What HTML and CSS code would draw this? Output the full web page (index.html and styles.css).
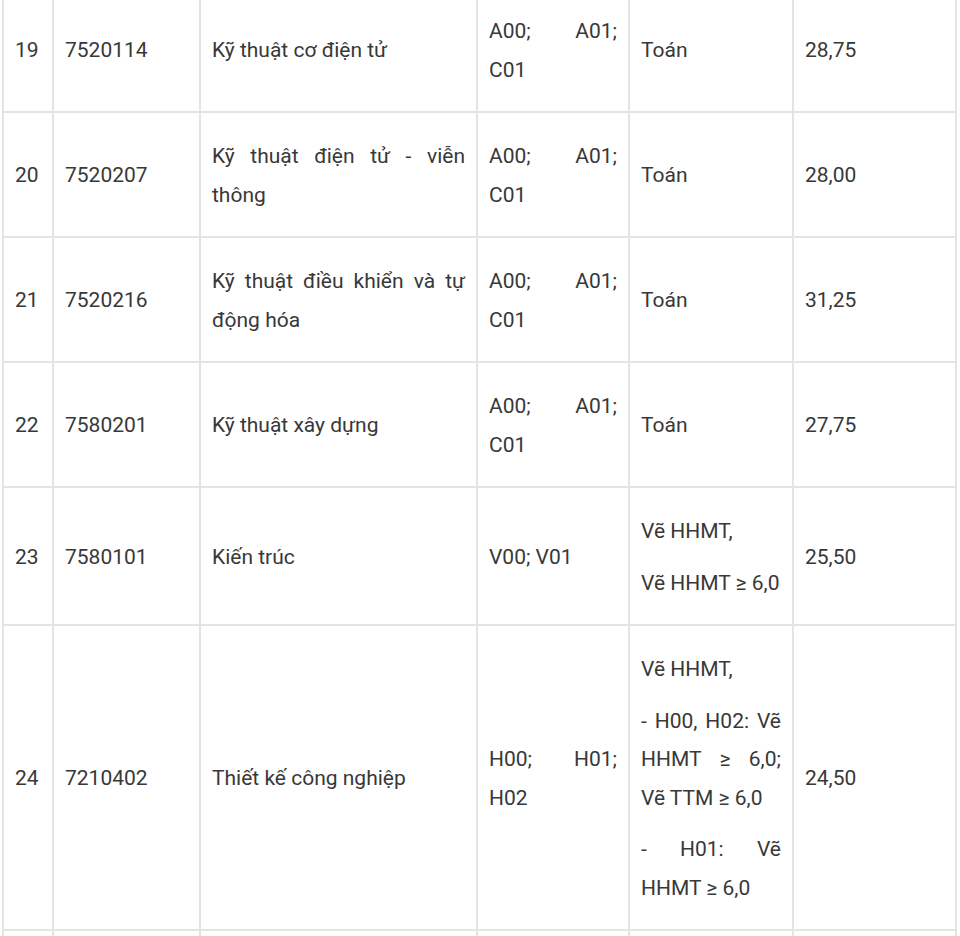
FILE: index.html
```html
<!DOCTYPE html>
<html lang="vi">
<head>
<meta charset="utf-8">
<title>Bảng điểm chuẩn</title>
<link rel="stylesheet" href="styles.css">
</head>
<body>
<div class="page">
<table class="score-table">
  <colgroup>
    <col class="c-stt">
    <col class="c-code">
    <col class="c-name">
    <col class="c-group">
    <col class="c-cond">
    <col class="c-score">
  </colgroup>
  <tbody>
    <tr>
      <td><p>19</p></td>
      <td><p>7520114</p></td>
      <td><p>Kỹ thuật cơ điện tử</p></td>
      <td><p>A00; A01; C01</p></td>
      <td><p>Toán</p></td>
      <td><p>28,75</p></td>
    </tr>
    <tr>
      <td><p>20</p></td>
      <td><p>7520207</p></td>
      <td><p>Kỹ thuật điện tử - viễn thông</p></td>
      <td><p>A00; A01; C01</p></td>
      <td><p>Toán</p></td>
      <td><p>28,00</p></td>
    </tr>
    <tr>
      <td><p>21</p></td>
      <td><p>7520216</p></td>
      <td><p>Kỹ thuật điều khiển và tự động hóa</p></td>
      <td><p>A00; A01; C01</p></td>
      <td><p>Toán</p></td>
      <td><p>31,25</p></td>
    </tr>
    <tr>
      <td><p>22</p></td>
      <td><p>7580201</p></td>
      <td><p>Kỹ thuật xây dựng</p></td>
      <td><p>A00; A01; C01</p></td>
      <td><p>Toán</p></td>
      <td><p>27,75</p></td>
    </tr>
    <tr>
      <td><p>23</p></td>
      <td><p>7580101</p></td>
      <td><p>Kiến trúc</p></td>
      <td><p>V00; V01</p></td>
      <td><p>Vẽ HHMT,</p><p>Vẽ HHMT ≥ 6,0</p></td>
      <td><p>25,50</p></td>
    </tr>
    <tr>
      <td><p>24</p></td>
      <td><p>7210402</p></td>
      <td><p>Thiết kế công nghiệp</p></td>
      <td><p>H00; H01; H02</p></td>
      <td><p>Vẽ HHMT,</p><p>- H00, H02: Vẽ HHMT ≥ 6,0; Vẽ TTM ≥ 6,0</p><p>- H01: Vẽ HHMT ≥ 6,0</p></td>
      <td><p>24,50</p></td>
    </tr>
    <tr class="row-next">
      <td></td>
      <td></td>
      <td></td>
      <td></td>
      <td></td>
      <td></td>
    </tr>
  </tbody>
</table>
</div>
</body>
</html>
```

FILE: styles.css
```css
html, body {
  margin: 0;
  padding: 0;
  background: #ffffff;
}

.page {
  padding-left: 2px;
  margin-top: -14px;
  overflow: hidden;
}

.score-table {
  border-collapse: separate;
  border-spacing: 0;
  table-layout: fixed;
  width: 955px;
  border-top: 2px solid #e4e4e4;
  border-left: 2px solid #e4e4e4;
  font-family: Roboto, "Noto Sans", "Liberation Sans", sans-serif;
  font-size: 21px;
  line-height: 38.5px;
  color: #383838;
}

.c-stt { width: 50px; }
.c-code { width: 147px; }
.c-name { width: 277px; }
.c-group { width: 152px; }
.c-cond { width: 164px; }
.c-score { width: 163px; }

.score-table td {
  border-right: 2px solid #e4e4e4;
  border-bottom: 2px solid #e4e4e4;
  padding: 11px 11px 9px;
  vertical-align: middle;
  text-align: justify;
}

.score-table p {
  margin: 13px 0;
}

.row-next td {
  height: 60px;
}
```
